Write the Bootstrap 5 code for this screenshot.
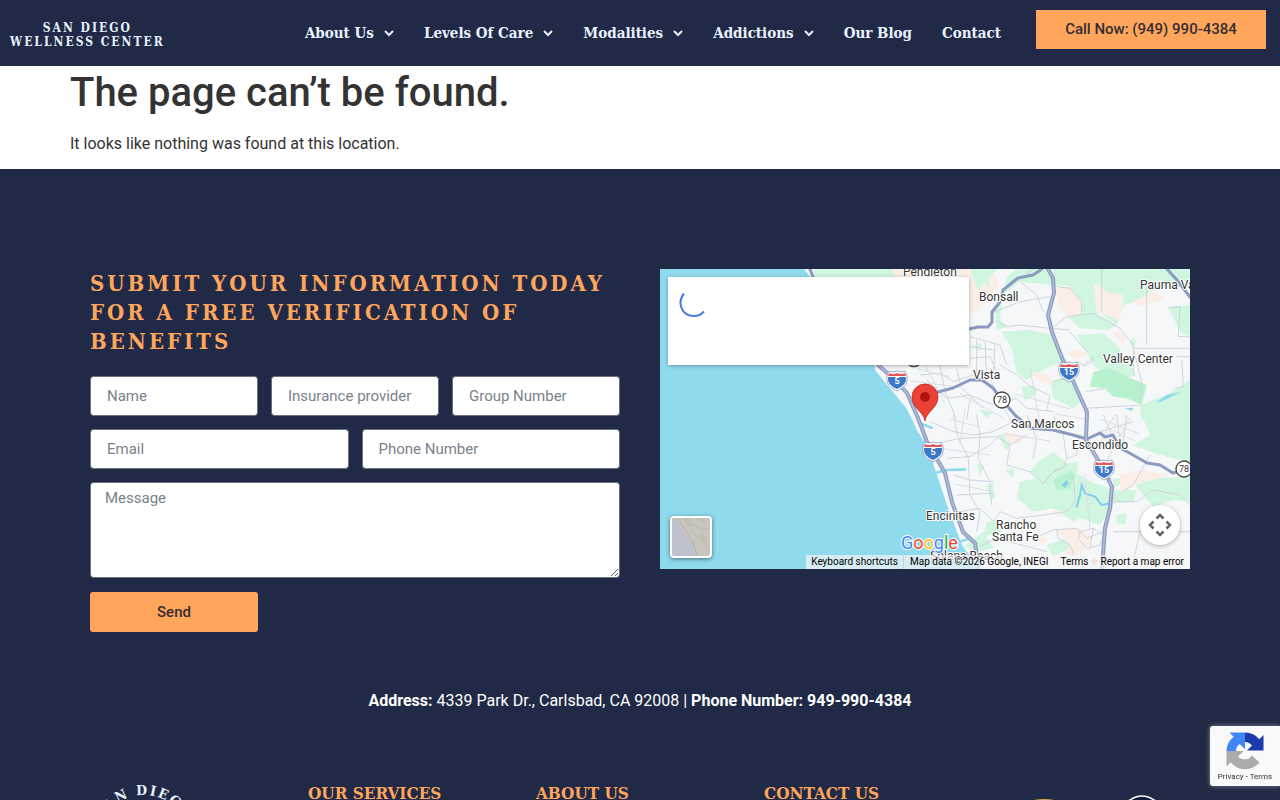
<!DOCTYPE html>
<html lang="en">
<head>
<meta charset="utf-8">
<meta name="viewport" content="width=device-width, initial-scale=1">
<title>Page not found – San Diego Wellness Center</title>
<link href="https://cdn.jsdelivr.net/npm/bootstrap@5.3.0/dist/css/bootstrap.min.css" rel="stylesheet">
<style>
:root { --navy: #202945; --orange: #ffa65c; --ice: #e9f2ff; --slab: "DejaVu Serif Condensed", "DejaVu Serif", serif; }
body { font-family: Roboto, "Liberation Sans", sans-serif; font-size: 16px; color: #333; background: var(--navy); }
.site-header { background: var(--navy); min-height: 66px; padding: 0 14px 0 10px; }
.brand { font: bold 12px/14px var(--slab); letter-spacing: 2px; color: var(--ice); text-align: center; text-decoration: none; }
.main-nav { gap: 30px; margin-right: 35px; }
.main-nav a { font: bold 15px/24px var(--slab); color: var(--ice); text-decoration: none; display: flex; align-items: center; gap: 10px; white-space: nowrap; }
.btn-call { width: 230px; height: 39px; margin-top: 10px; border: 0; border-radius: 0; background: var(--orange); color: #332d33; font-size: 15px; font-weight: 500; line-height: 39px; padding: 0; }
.page-wrap { max-width: 1140px; margin: 0 auto; }
.page-title { font: 500 40px/48px Roboto, sans-serif; color: #333; margin: 0; padding: 3px 0 15px; }
.page-text { line-height: 24px; margin: 0; padding-bottom: 13px; }
.lead-area { padding-top: 100px; }
.panel { padding: 0 20px; }
.form-title { font: bold 22px/29px var(--slab); letter-spacing: 3px; color: var(--orange); margin: 0 0 20px; text-transform: uppercase; }
.lead-form { display: grid; grid-template-columns: repeat(6, 1fr); gap: 13px; }
.third { grid-column: span 2; } .half { grid-column: span 3; } .full { grid-column: span 6; }
.lead-form .form-control { height: 40px; border: 1px solid #69727d; border-radius: 3px; padding: 0 16px; font-size: 15px; color: #333; }
.lead-form textarea.form-control { height: 96px; padding: 4px 14px; display: block; resize: vertical; margin-bottom: 1px; }
.lead-form .form-control::placeholder { color: #7a828c; }
.btn-send { height: 40px; border: 0; border-radius: 3px; background: var(--orange); color: #332d33; font-size: 15px; font-weight: 500; padding: 0; }
.map { position: relative; height: 300px; overflow: hidden; background: #90daee; }
.map-canvas { display: block; width: 100%; height: 100%; }
.map-card { position: absolute; left: 8px; top: 8px; width: 301px; height: 88px; background: #fff; box-shadow: 0 1px 4px rgba(0,0,0,.3); }
.map-card svg { margin: 11px; }
.map-thumb { position: absolute; left: 10px; bottom: 11px; width: 42px; height: 42px; border: 2px solid #fff; border-radius: 4px; padding: 0; overflow: hidden; box-shadow: 0 1px 4px rgba(0,0,0,.5); }
.map-thumb svg, .map-pan svg { display: block; }
.map-pan { position: absolute; right: 10px; bottom: 24px; width: 40px; height: 40px; border: 0; border-radius: 50%; background: #fff; padding: 8px; box-shadow: 0 1px 4px rgba(0,0,0,.3); }
.map-bar { position: absolute; right: 0; bottom: 0; font-size: 10px; line-height: 14px; white-space: nowrap; }
.map-bar > * { background: rgba(245,245,245,.7); color: #000; border: 0; padding: 0 6px; text-decoration: none; }
.map-bar button { border-right: 1px solid #b9d9df; padding: 0 5px; }
.map-canvas text { font: 12px Roboto, sans-serif; fill: #333; }
.map-canvas .place { stroke: #fff; stroke-width: 2px; paint-order: stroke; stroke-linejoin: round; }
.map-canvas .logo-g { font: 400 18px Roboto, sans-serif; stroke: #fff; stroke-width: 2px; paint-order: stroke; }
.map-canvas .num { font-size: 9px; font-weight: 700; fill: #fff; text-anchor: middle; }
.contact-line { color: #fff; line-height: 24px; padding: 57px 0 68px; margin: 0; text-align: center; }
.foot-cell { flex: 1 1 0; min-width: 0; padding: 0 10px; }
.foot-title { font: bold 17px/24px var(--slab); color: var(--orange); margin: 0; white-space: nowrap; }
.foot-badges { padding-top: 14px; }
.foot-logo { margin-left: 4px; }
.foot-logo text { font: bold 14px var(--slab); fill: var(--ice); letter-spacing: 2px; text-anchor: middle; }
.captcha { position: fixed; right: 0; bottom: 14px; width: 70px; height: 60px; background: #f9f9f9; border-radius: 3px 0 0 3px; box-shadow: 0 0 5px #888; font-size: 8px; line-height: 10px; color: #333; text-align: center; padding-top: 5px; white-space: nowrap; }
.captcha a { color: #333; text-decoration: none; }
.captcha svg { display: block; margin: 0 auto 1px; }
</style>
</head>
<body>
<header class="site-header d-flex align-items-start">
  <a class="brand align-self-center mt-1" href="#">SAN DIEGO<br>WELLNESS CENTER</a>
  <nav class="main-nav d-flex align-self-center ms-auto" aria-label="Main">
    <a href="#">About Us <svg width="10" height="7" viewBox="0 0 10 7" fill="none" stroke="currentColor" stroke-width="2"><path d="M1 1l4 4 4-4"/></svg></a>
    <a href="#">Levels Of Care <svg width="10" height="7" viewBox="0 0 10 7" fill="none" stroke="currentColor" stroke-width="2"><path d="M1 1l4 4 4-4"/></svg></a>
    <a href="#">Modalities <svg width="10" height="7" viewBox="0 0 10 7" fill="none" stroke="currentColor" stroke-width="2"><path d="M1 1l4 4 4-4"/></svg></a>
    <a href="#">Addictions <svg width="10" height="7" viewBox="0 0 10 7" fill="none" stroke="currentColor" stroke-width="2"><path d="M1 1l4 4 4-4"/></svg></a>
    <a href="#">Our Blog</a>
    <a href="#">Contact</a>
  </nav>
  <a class="btn btn-call flex-shrink-0" href="tel:9499904384">Call Now: (949) 990-4384</a>
</header>

<main class="bg-white">
  <div class="page-wrap">
    <h1 class="page-title">The page can’t be found.</h1>
    <p class="page-text">It looks like nothing was found at this location.</p>
  </div>
</main>

<footer>
  <div class="page-wrap">
    <div class="row g-0 lead-area">
      <section class="col-6 panel">
        <h2 class="form-title">Submit your information today for a free verification of benefits</h2>
        <form class="lead-form">
          <div class="third"><label class="visually-hidden" for="f-name">Name</label><input class="form-control" id="f-name" type="text" placeholder="Name"></div>
          <div class="third"><label class="visually-hidden" for="f-ins">Insurance provider</label><input class="form-control" id="f-ins" type="text" placeholder="Insurance provider"></div>
          <div class="third"><label class="visually-hidden" for="f-group">Group Number</label><input class="form-control" id="f-group" type="text" placeholder="Group Number"></div>
          <div class="half"><label class="visually-hidden" for="f-email">Email</label><input class="form-control" id="f-email" type="email" placeholder="Email"></div>
          <div class="half"><label class="visually-hidden" for="f-phone">Phone Number</label><input class="form-control" id="f-phone" type="tel" placeholder="Phone Number"></div>
          <div class="full"><label class="visually-hidden" for="f-msg">Message</label><textarea class="form-control" id="f-msg" placeholder="Message"></textarea></div>
          <button class="btn btn-send third" type="submit">Send</button>
        </form>
      </section>
      <section class="col-6 panel">
        <div class="map">
          <svg class="map-canvas" viewBox="0 0 530 300" preserveAspectRatio="xMidYMid slice" role="img" aria-label="Map of Carlsbad and surroundings">
            <defs>
              <g id="shield"><path d="M-8-9Q-4-7 0-9Q4-7 8-9Q12-3 9 4Q7 8 0 11Q-7 8-9 4Q-12-3-8-9Z" fill="#fff" stroke="#7d8bb2" stroke-width=".7"/><path d="M-8-7Q-4-5 0-7Q4-5 8-7L9-4H-9Z" fill="#e05a5c"/><path d="M-9-3H9Q10 5 0 9Q-10 5-9-3Z" fill="#3c78c8"/></g>
            </defs>
            <path fill="#f6f7f9" d="M144 0L151 9 180 60 215 97 215 101 233 123 247 140 258 163 267 177 277 206 287 236 297 263 303 278 313 290 317 300H530V0Z"/>
            <!-- northern parkland and hills -->
            <path fill="#d0f6e0" d="M154 0H232L240 8H154Z"/>
            <path fill="#fbeee6" d="M232 0H330L340 14 325 34 309 46V8H236Z"/>
            <g transform="translate(260 -4) scale(.33333)">
              <g fill="#d0f6e0">
                <path d="M150 12H230L205 45 215 90 170 70Z M290 12H385L398 60 300 50 250 90 260 35Z M225 130L245 120 240 165 265 185 230 195Z"/>
                <path d="M400 12H810V60L700 75 650 110 610 120 590 180 540 145 490 150 450 65 405 60Z"/>
                <path d="M440 155L520 140 590 180 560 195 480 190Z M745 125L810 120V215L780 200Z"/>
                <path d="M245 200L330 195 395 210 425 290 360 320 320 345 290 325 275 250Z M470 210L550 205 590 240 630 300 650 330 590 350 520 300Z"/>
                <path d="M390 350L430 335 455 355 490 405 460 430 400 400Z M305 365L345 360 350 385 315 410Z M660 420L740 390 810 345V465H665Z M160 240L185 235 180 260Z M640 215L650 230 640 250 630 235Z M180 435L220 440 200 460Z"/>
              </g>
              <path fill="#b7f1cd" d="M520 320L570 310 610 330 680 360 665 420 620 400 580 395 555 370 510 365Z"/>
              <g fill="#fbeee6">
                <path d="M405 70L450 65 485 110 480 150 445 155 415 120Z M520 50L560 80 610 90 600 165 530 140Z M570 195L620 210 610 240Z M440 265L480 250 500 270 470 285Z M335 320L390 330 395 360 350 345Z M640 110L700 80 740 100 660 125Z M190 50L220 80 205 120 175 90Z"/>
              </g>
              <path fill="#90daee" d="M710 410L740 390 785 380 740 402 720 412Z M615 430L640 428 635 438Z"/>
              <!-- minor roads -->
              <g fill="none" stroke="#cfd4dd" stroke-width="3">
                <path d="M225 165L260 185 300 180 390 190 450 195M215 145L300 110 390 95M395 190L440 155 520 145 600 190 640 240 640 330M410 65L450 70 485 110 485 150M545 12L545 140M680 70V240M660 400L665 350 640 250H810M745 130L780 125 775 215H810M770 275H810M765 370L790 365 785 285"/>
                <path d="M150 215L240 240 260 300M150 245L220 255M150 280L210 275 230 320M170 225V330M195 230L200 340M225 235L220 330M0 330L60 325 100 350 160 330M20 345L80 400 150 390 220 420M60 300L75 380 110 465M110 310L125 370 190 430M150 400L140 465M230 420L290 400 320 430 400 440M240 300L290 330 340 370 390 390 380 440M400 350L440 340 470 290 490 300 520 275 515 290 490 305"/>
                <path d="M300 50L350 90 370 140M450 200L500 260M340 12L320 30M555 370L500 380M500 430L660 420"/>
              </g>
            </g>
            <g transform="translate(260 146) scale(.33333)">
              <g fill="#d0f6e0">
                <path d="M665 0H810V140L760 130 690 110 640 90 690 60Z M355 140L400 110 440 145 475 140 470 175 520 205 560 215 590 225 650 225 640 260 580 265 540 330 480 310 460 320 400 280 340 290 290 250 300 200 350 190 330 170Z"/>
                <path d="M645 210L700 190 810 185V260L760 255 700 275Z M255 165L285 160 280 190Z M170 140L190 160 180 185Z M200 210L220 205 225 250 210 255Z M235 60L285 55 260 110Z M580 190L600 190 605 205 580 220Z M200 320L240 315 245 350 190 365Z M380 390L440 370 450 400 400 425Z M130 395L190 350 220 400 170 410Z M590 300L620 295 615 330 590 325Z"/>
              </g>
              <path fill="#b7f1cd" d="M400 195L455 165 465 180 450 220 410 225Z"/>
              <path fill="#fbeee6" d="M250 50L310 60 300 85 260 80Z M600 180L670 165 750 180 700 195 640 210 600 235Z M395 285L440 290 410 305Z M410 345L480 340 520 370 480 420 430 425 450 390Z M340 360L380 370 370 390Z"/>
              <g fill="none" stroke="#90daee" stroke-linecap="round">
                <path stroke-width="8" d="M52 172L80 165 135 163M0 25L35 38M125 378L145 372"/>
                <path stroke="#84cdf0" stroke-width="6" d="M470 275L480 240 485 210 495 235 525 245 545 270 570 265"/>
              </g>
              <path fill="#84cdf0" d="M425 210L440 195 445 205 435 218Z"/>
              <g fill="none" stroke="#cfd4dd" stroke-width="3">
                <path d="M30 20L100 50 160 60 220 50 280 20M55 85L120 70 230 65 270 90 320 60M80 130L150 125 210 90 240 60M100 180L150 195 220 200M110 240L220 235M120 290L180 280 220 320M100 0L115 70 145 130 150 240 180 290 170 350M170 0L180 60 175 130 210 200 215 270M270 90L260 150 330 170 370 205 400 170 440 150M370 205L400 170 430 160 440 130 470 120 480 60M460 180L465 260 440 290 370 300 290 310M220 320L240 290 290 310M340 370L400 345 470 340 500 370 550 350"/>
                <path d="M580 260L650 260 700 225 780 240 810 270M600 235L640 210 690 120M550 0L575 60M590 0L600 80M620 0L610 80 580 90M640 20L540 50M400 0L430 60 440 130M320 0L350 70 340 130M580 350H810M580 100L560 140M660 350L640 440M410 345L415 370 450 390 470 440M180 395L230 370 380 410"/>
                <path d="M480 350L520 340 550 360 540 390 500 400 475 370ZM520 340L510 400"/>
              </g>
            </g>
            <!-- street grid around Vista and Escondido -->
            <g fill="none" stroke="#dcdfe6" stroke-width="1">
              <path d="M258 100L290 108M250 112L300 118M265 96L285 135M300 125L345 150M330 110L355 160M355 125L410 140M370 100L380 155M395 145L425 150M440 150L480 165M445 158L475 172M455 145L440 175M470 148L455 178M290 150L320 158M305 140L300 175M345 165L390 172M284 180L330 186M295 215L330 222M425 205L430 260M455 225L440 290"/>
            </g>
            <!-- highways -->
            <g fill="none" stroke-linejoin="round" stroke-linecap="round">
              <g stroke="#8b9abf" stroke-width="4">
                <path d="M218 96L233 109 247 124 258 149 267 173 273 183 285 204 292 233 303 263 315 274 319 300"/>
                <path d="M388 0L393 9 394 24 388 46 392 63 402 89 409 103 427 143 426 171 435 186 444 201 452 218 450 239 445 259 442 300"/>
                <path stroke-width="3" d="M278 123L293 119 310 111 322 111 333 119 342 131 355 146 370 159 393 161 413 166 427 170 440 164 445 168 453 166 460 179 473 186 487 194 500 196 513 204 524 201M309 60L318 58 328 58 332 53 332 43 340 33 343 21 358 9 373 6 382 0M507 0L517 11 530 28M150 0L153 8"/>
              </g>
              <path stroke="#b3bfda" stroke-width="1.500" d="M218 96L233 109 247 124 258 149 267 173 273 183 285 204 292 233 303 263 315 274 319 300M388 0L393 9 394 24 388 46 392 63 402 89 409 103 427 143 426 171 435 186 444 201 452 218 450 239 445 259 442 300"/>
            </g>
            <use href="#shield" x="237" y="111"/><text class="num" x="237" y="115">5</text>
            <use href="#shield" x="273" y="182"/><text class="num" x="273" y="186">5</text>
            <use href="#shield" x="409" y="102"/><text class="num" x="409" y="106">15</text>
            <use href="#shield" x="444" y="200"/><text class="num" x="444" y="204">15</text>
            <g fill="#fff" stroke="#444" stroke-width="1.3"><circle cx="254" cy="89" r="8.500"/><circle cx="342" cy="131" r="8"/><circle cx="524" cy="200" r="8"/></g>
            <text x="342" y="134" text-anchor="middle" style="font-size:9px">78</text>
            <text x="524" y="203" text-anchor="middle" style="font-size:9px">78</text>
            <text class="place" x="243" y="7">Pendleton</text>
            <text class="place" x="319" y="32">Bonsall</text>
            <text class="place" x="480" y="20">Pauma Valley</text>
            <text class="place" x="443" y="94">Valley Center</text>
            <text class="place" x="313" y="110">Vista</text>
            <text class="place" x="351" y="159">San Marcos</text>
            <text class="place" x="412" y="180">Escondido</text>
            <text class="place" x="266" y="251">Encinitas</text>
            <text class="place" x="336" y="260">Rancho</text>
            <text class="place" x="332" y="272">Santa Fe</text>
            <text class="place" x="270" y="291">Solana Beach</text>
            <path d="M265 152C264 143 252 139 252 128A13 13 0 0 1 278 128C278 139 266 143 265 152Z" fill="#ea4335" stroke="#c5221f" stroke-width=".8"/><circle cx="265" cy="128" r="5" fill="#b31412"/>
            <text class="logo-g" x="241" y="280"><tspan fill="#4285f4">G</tspan><tspan fill="#ea4335">o</tspan><tspan fill="#fbbc05">o</tspan><tspan fill="#4285f4">g</tspan><tspan fill="#34a853">l</tspan><tspan fill="#ea4335">e</tspan></text>
            <path d="M434 289V296M431 292H438" stroke="#f0a0a0" stroke-width="2"/>
          </svg>
          <div class="map-card" role="status" aria-label="Loading">
            <svg width="30" height="30" viewBox="0 0 30 30" fill="none" stroke="#4a7be0" stroke-width="2"><path d="M5 5.500C-2 14 2 28 15 28Q21 28 25 23.500"/></svg>
          </div>
          <button class="map-thumb" type="button" aria-label="Show satellite imagery">
            <svg width="38" height="38" viewBox="0 0 38 38"><path fill="#c9c5bf" d="M0 0H38V38H0Z"/><path fill="#bfc0cd" d="M0 0H3L12 14 20 26 23 38H0Z"/><g fill="none" stroke="#b3aea8"><path d="M5 0L15 14 22 27 25 38"/><path stroke="#bdb8b1" d="M20 5L28 12 38 10M18 14L30 22 38 32"/></g><path fill="#bcc1b3" d="M10 0H18L22 9 16 8ZM28 15L36 20 30 25ZM24 0H32L34 6Z"/></svg>
          </button>
          <button class="map-pan" type="button" aria-label="Map camera controls">
            <svg width="24" height="24" viewBox="0 0 24 24" fill="none" stroke="#666" stroke-width="2.500"><path d="M8.500 5.500L12 2l3.500 3.500M8.500 18.500L12 22l3.500-3.500M5.500 8.500L2 12l3.500 3.500M18.500 8.500L22 12l-3.500 3.500"/></svg>
          </button>
          <div class="map-bar d-flex">
            <button type="button">Keyboard shortcuts</button><span>Map data ©2026 Google, INEGI</span><a href="#">Terms</a><a href="#">Report a map error</a>
          </div>
        </div>
      </section>
    </div>

    <p class="contact-line"><strong>Address:</strong> 4339 Park Dr., Carlsbad, CA 92008 | <strong>Phone Number: 949-990-4384</strong></p>

    <div class="d-flex">
      <div class="foot-cell">
        <svg class="foot-logo" width="124" height="124" viewBox="0 0 124 124" role="img" aria-label="San Diego Wellness Center">
          <path id="ring" d="M14 60A46 46 0 0 1 106 60" fill="none"/>
          <text><textPath href="#ring" startOffset="50%">SAN DIEGO</textPath></text>
        </svg>
      </div>
      <div class="foot-cell"><h3 class="foot-title">OUR SERVICES</h3></div>
      <div class="foot-cell"><h3 class="foot-title">ABOUT US</h3></div>
      <div class="foot-cell"><h3 class="foot-title">CONTACT US</h3></div>
      <div class="foot-cell foot-badges d-flex">
        <svg width="102" height="112" viewBox="0 0 102 112"><circle cx="52" cy="56" r="52" fill="#d1a93c"/></svg>
        <svg width="106" height="112" viewBox="0 0 106 112"><path d="M36 5Q48-3 60 5L96 26V80L48 108 0 80V26Z" fill="#0d1c3d" stroke="#fff" stroke-width="1.500"/></svg>
      </div>
    </div>
  </div>
</footer>

<aside class="captcha">
  <svg width="40" height="40" viewBox="0 0 40 40"><path fill="#1c3aa9" d="M38.500 19.500V4L34.300 8.200A18.500 18.500 0 0 0 20 1.500V11A9 9 0 0 1 27 14.500L22 19.500Z"/><path fill="#4285f4" d="M20 1.500H4.500L8.700 5.700A18.500 18.500 0 0 0 1.500 20H11A9 9 0 0 1 14.500 13L20 18Z"/><path fill="#ababab" d="M1.500 20V35.500L5.700 31.300A18.500 18.500 0 0 0 34.500 31.500L27 24.500A9 9 0 0 1 13 25.500L18.500 20Z"/></svg>
  <a href="#">Privacy</a> - <a href="#">Terms</a>
</aside>
<script src="https://cdn.jsdelivr.net/npm/bootstrap@5.3.0/dist/js/bootstrap.bundle.min.js"></script>
</body>
</html>
